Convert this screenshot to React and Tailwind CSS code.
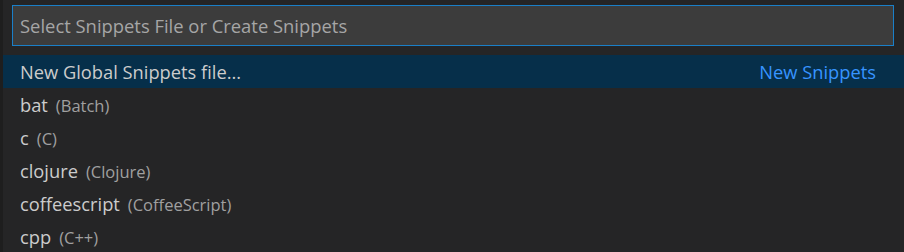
const items = [
  { label: "bat", desc: "Batch" },
  { label: "c", desc: "C" },
  { label: "clojure", desc: "Clojure" },
  { label: "coffeescript", desc: "CoffeeScript" },
  { label: "cpp", desc: "C++" },
];

export default function App() {
  return (
    <div
      className="flex h-[252px] w-[904px] overflow-hidden bg-[#1e1e1e] text-[18.3px] text-[#cccccc]"
      style={{ fontFamily: '"Open Sans", "Noto Sans", sans-serif' }}
    >
      <div className="w-[3px] shrink-0" />
      <div className="flex flex-1 flex-col bg-[#252526]">
        <div className="pb-[9px] pl-[9px] pr-[10px] pt-[5px]">
          <div className="flex h-[41px] items-center border border-[#1a7fc8] bg-[#3c3c3c] px-[7px] text-[18.4px] text-[#a6a6a6]">
            Select Snippets File or Create Snippets
          </div>
        </div>
        <div className="flex h-[33px] shrink-0 items-center justify-between bg-[#062f4a] pl-[17px] pr-[28px]">
          <span>New Global Snippets file...</span>
          <span className="text-[#3794ff]">New Snippets</span>
        </div>
        {items.map((it) => (
          <div key={it.label} className="flex h-[33px] shrink-0 items-baseline pl-[17px] pt-[3px]">
            <span>{it.label}</span>
            <span className="ml-[8px] text-[16.5px] text-[#a0a0a0]">({it.desc})</span>
          </div>
        ))}
      </div>
    </div>
  );
}
